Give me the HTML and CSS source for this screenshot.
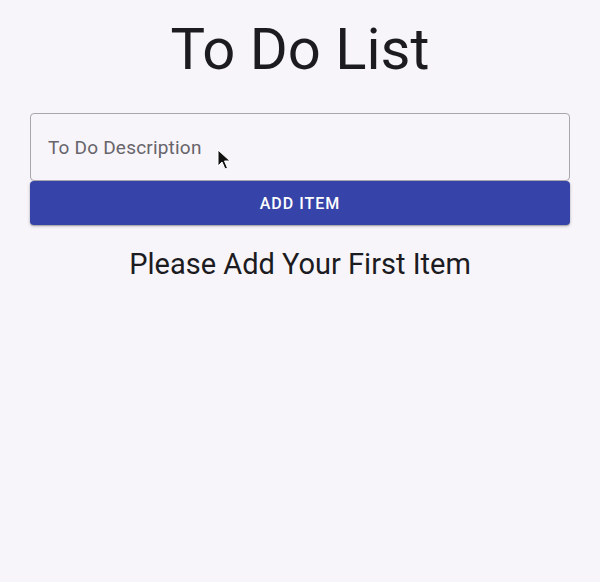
FILE: index.html
```html
<!DOCTYPE html>
<html>
<head>
<meta charset="utf-8">
<link rel="stylesheet" href="styles.css">
</head>
<body>
<main class="app">
  <h1 class="title">To Do List</h1>
  <div class="field">
    <input class="input" type="text" placeholder="To Do Description">
    <svg class="cursor" width="14" height="22" viewBox="0 0 14 22"><path d="M1 1 L1 17 L5 13 L8 20 L10.5 19 L7.5 12 L13 12 Z" fill="#111" stroke="#fff" stroke-width="1"/></svg>
  </div>
  <button class="add">ADD ITEM</button>
  <p class="empty">Please Add Your First Item</p>
</main>
</body>
</html>
```
FILE: styles.css
```css
html, body {
  margin: 0;
  padding: 0;
  background: #f7f5f9;
  font-family: Roboto, "Noto Sans", sans-serif;
}
.app {
  padding: 0 30px;
  display: flex;
  flex-direction: column;
}
.title {
  margin: 14px 0 0;
  font-weight: 400;
  font-size: 58px;
  line-height: 70px;
  text-align: center;
  color: #1c1b1f;
}
.field {
  position: relative;
  margin-top: 29px;
}
.input {
  box-sizing: border-box;
  width: 100%;
  height: 68px;
  border: 1px solid #a9a7ad;
  border-radius: 4px;
  background: #f7f5f9;
  padding: 0 17px;
  font-family: Roboto, sans-serif;
  font-size: 19px;
  letter-spacing: 0.2px;
  color: #1c1b1f;
  outline: none;
}
.input::placeholder {
  color: #67646b;
}
.cursor {
  position: absolute;
  left: 187px;
  top: 36px;
}
.add {
  margin-top: 0;
  height: 44px;
  border: none;
  border-radius: 4px;
  background: #3644a9;
  color: #fff;
  font-family: Roboto, sans-serif;
  font-size: 16px;
  font-weight: 500;
  letter-spacing: 1px;
  box-shadow: 0 1px 3px rgba(0,0,0,0.3), 0 1px 1px rgba(0,0,0,0.14);
}
.empty {
  margin: 22px 0 0;
  text-align: center;
  font-size: 29px;
  line-height: 34px;
  color: #1c1b1f;
}
```
